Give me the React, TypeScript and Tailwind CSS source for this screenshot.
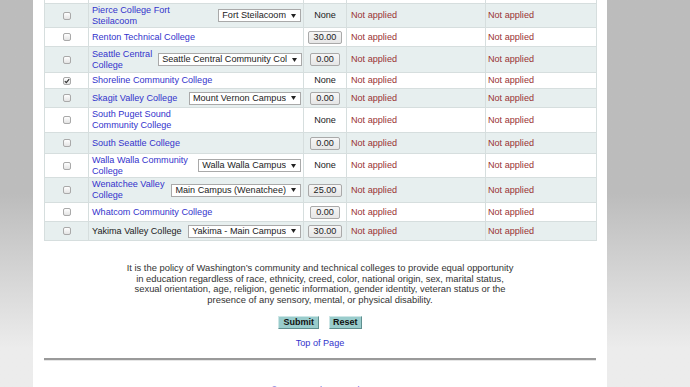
import React from 'react';

type Row = {
  name: React.ReactNode;
  link: boolean;
  campus?: string;
  campusW?: string;
  fee: string;
  checked?: boolean;
  shaded: boolean;
  h: string;
};

const rows: Row[] = [
  { name: <>Pierce College Fort<br />Steilacoom</>, link: true, campus: 'Fort Steilacoom', fee: 'None', shaded: true, h: 'h-[24px]' },
  { name: 'Renton Technical College', link: true, fee: '30.00', shaded: false, h: 'h-[19px]' },
  { name: <>Seattle Central<br />College</>, link: true, campus: 'Seattle Central Community College', campusW: 'w-[144px]', fee: '0.00', shaded: true, h: 'h-[26px]' },
  { name: 'Shoreline Community College', link: true, fee: 'None', checked: true, shaded: false, h: 'h-[16px]' },
  { name: 'Skagit Valley College', link: true, campus: 'Mount Vernon Campus', fee: '0.00', shaded: true, h: 'h-[19px]' },
  { name: <>South Puget Sound<br />Community College</>, link: true, fee: 'None', shaded: false, h: 'h-[25px]' },
  { name: 'South Seattle College', link: true, fee: '0.00', shaded: true, h: 'h-[21px]' },
  { name: <>Walla Walla Community<br />College</>, link: true, campus: 'Walla Walla Campus', fee: 'None', shaded: false, h: 'h-[24px]' },
  { name: <>Wenatchee Valley<br />College</>, link: true, campus: 'Main Campus (Wenatchee)', fee: '25.00', shaded: true, h: 'h-[25px]' },
  { name: 'Whatcom Community College', link: true, fee: '0.00', shaded: false, h: 'h-[19px]' },
  { name: 'Yakima Valley College', link: false, campus: 'Yakima - Main Campus', fee: '30.00', shaded: true, h: 'h-[19px]' },
];

function Checkbox({ checked }: { checked?: boolean }) {
  return (
    <span className="inline-flex w-[8px] h-[8px] items-center justify-center rounded-[2px] border border-[#a9a9a9] bg-linear-to-b from-white to-[#e4e4e4] align-middle">
      {checked && (
        <svg width="6" height="6" viewBox="0 0 6 6">
          <path d="M0.8 3.1 L2.3 4.6 L5.2 1.2" fill="none" stroke="#333" strokeWidth="1.2" />
        </svg>
      )}
    </span>
  );
}

function CampusSelect({ label, w }: { label: string; w?: string }) {
  return (
    <div className={`flex h-[13px] shrink-0 items-center border border-[#a9a9a9] bg-white pl-[3px] pr-[4px] text-[#222] ${w ?? ''}`}>
      <span className="min-w-0 flex-1 overflow-hidden whitespace-nowrap">{label}</span>
      <svg className="ml-[5px] shrink-0" width="5" height="4" viewBox="0 0 5 4">
        <path d="M0 0 H5 L2.5 4 Z" fill="#222" />
      </svg>
    </div>
  );
}

function FeeButton({ value }: { value: string }) {
  return (
    <span className="inline-flex h-[13px] items-center rounded-[2px] border border-[#a9a9a9] bg-linear-to-b from-[#f6f6f6] to-[#e6e6e6] px-[5px] text-[#222]">
      {value}
    </span>
  );
}

export default function App() {
  return (
    <div className="h-[387px] w-[690px] overflow-hidden bg-linear-to-b from-[#bcbcbc] from-50% to-[#ececec] to-90% pl-[33px] font-['Liberation_Sans',Arial,sans-serif] text-[9.1px] leading-[11px] text-[#222]">
      <div className="flex h-full w-[574px] flex-col bg-white px-[11px]">
        <table className="-mt-[16px] w-[552px] table-fixed border-collapse">
          <colgroup>
            <col className="w-[44px]" />
            <col className="w-[215px]" />
            <col className="w-[43px]" />
            <col className="w-[139px]" />
            <col className="w-[111px]" />
          </colgroup>
          <tbody>
            <tr className="h-[19px] bg-white">
              <td className="border border-[#d6dede] text-center"><Checkbox /></td>
              <td className="border border-[#d6dede] px-[3px] text-[#3333cc]">Peninsula College</td>
              <td className="border border-[#d6dede] text-center">None</td>
              <td className="border border-[#d6dede] px-[3px] text-[#993333]">Not applied</td>
              <td className="border border-[#d6dede] px-[3px] text-[#993333]">Not applied</td>
            </tr>
            {rows.map((r, i) => (
              <tr key={i} className={`${r.h} ${r.shaded ? 'bg-[#e7efef]' : 'bg-white'}`}>
                <td className="border border-[#d6dede] p-0 text-center align-middle">
                  <Checkbox checked={r.checked} />
                </td>
                <td className="border border-[#d6dede] py-0 pl-[3px] pr-[2px] align-middle">
                  <div className="flex items-center justify-between gap-[6px]">
                    <span className={`whitespace-nowrap ${r.link ? 'text-[#3333cc]' : 'text-[#222]'}`}>{r.name}</span>
                    {r.campus && <CampusSelect label={r.campus} w={r.campusW} />}
                  </div>
                </td>
                <td className="border border-[#d6dede] p-0 text-center align-middle">
                  {r.fee === 'None' ? <span className="text-[#222]">None</span> : <FeeButton value={r.fee} />}
                </td>
                <td className="border border-[#d6dede] px-[4px] py-0 align-middle text-[#993333]">Not applied</td>
                <td className="border border-[#d6dede] px-[2px] py-0 align-middle text-[#993333]">Not applied</td>
              </tr>
            ))}
          </tbody>
        </table>

        <p className="mt-[22px] text-center text-[9.4px] leading-[10.6px] text-[#333]">
          It is the policy of Washington’s community and technical colleges to provide equal opportunity
          <br />
          in education regardless of race, ethnicity, creed, color, national origin, sex, marital status,
          <br />
          sexual orientation, age, religion, genetic information, gender identity, veteran status or the
          <br />
          presence of any sensory, mental, or physical disability.
        </p>

        <div className="mt-[11px] flex justify-center gap-[10px]">
          <button className="h-[13px] border border-t-[#cde6e6] border-l-[#cde6e6] border-r-[#5f8f8f] border-b-[#5f8f8f] bg-[#99cccc] px-[4px] text-[9px] font-bold leading-[11px] text-[#111]">
            Submit
          </button>
          <button className="h-[13px] border border-t-[#cde6e6] border-l-[#cde6e6] border-r-[#5f8f8f] border-b-[#5f8f8f] bg-[#99cccc] px-[3px] text-[9px] font-bold leading-[11px] text-[#111]">
            Reset
          </button>
        </div>

        <div className="mt-[9px] text-center">
          <a className="text-[#3333cc]">Top of Page</a>
        </div>

        <div className="mt-[9px] h-[2px] shrink-0 bg-[#9a9a9a]" />
        <div className="h-[1px] shrink-0 bg-[#e6e6e6]" />

        <div className="mt-[24px] text-center">
          <a className="text-[#3333cc]">©SBCTC Privacy Notice</a>
        </div>
      </div>
    </div>
  );
}
